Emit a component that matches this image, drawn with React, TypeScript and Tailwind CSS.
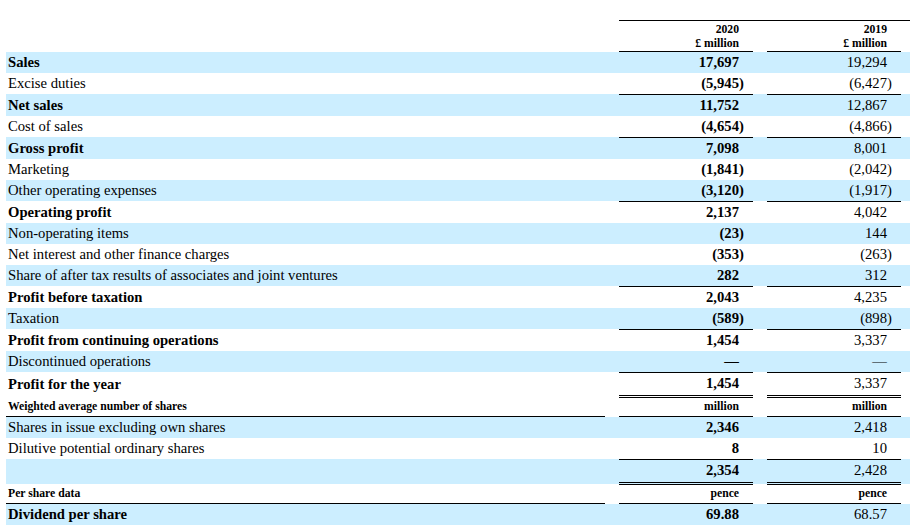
import React from "react";

type Row = {
  label: string;
  a: string;
  b: string;
  bold?: boolean;
  blue?: boolean;
  top?: boolean;
  double?: boolean;
};

const rows: Row[] = [
  { label: "Sales", a: "17,697", b: "19,294", bold: true, blue: true },
  { label: "Excise duties", a: "(5,945)", b: "(6,427)" },
  { label: "Net sales", a: "11,752", b: "12,867", bold: true, blue: true, top: true },
  { label: "Cost of sales", a: "(4,654)", b: "(4,866)" },
  { label: "Gross profit", a: "7,098", b: "8,001", bold: true, blue: true, top: true },
  { label: "Marketing", a: "(1,841)", b: "(2,042)" },
  { label: "Other operating expenses", a: "(3,120)", b: "(1,917)", blue: true },
  { label: "Operating profit", a: "2,137", b: "4,042", bold: true, top: true },
  { label: "Non-operating items", a: "(23)", b: "144", blue: true },
  { label: "Net interest and other finance charges", a: "(353)", b: "(263)" },
  { label: "Share of after tax results of associates and joint ventures", a: "282", b: "312", blue: true },
  { label: "Profit before taxation", a: "2,043", b: "4,235", bold: true, top: true },
  { label: "Taxation", a: "(589)", b: "(898)", blue: true },
  { label: "Profit from continuing operations", a: "1,454", b: "3,337", bold: true, top: true },
  { label: "Discontinued operations", a: "—", b: "—", blue: true },
  { label: "Profit for the year", a: "1,454", b: "3,337", bold: true, top: true, double: true },
];

const shareRows: Row[] = [
  { label: "Shares in issue excluding own shares", a: "2,346", b: "2,418", blue: true },
  { label: "Dilutive potential ordinary shares", a: "8", b: "10" },
  { label: "", a: "2,354", b: "2,428", blue: true, top: true, double: true },
];

function Num({ value }: { value: string }) {
  const neg = value.startsWith("(");
  return (
    <span className="whitespace-nowrap">
      {neg ? value.slice(0, -1) : value}
      <span className="inline-block w-[5px] text-left">{neg ? ")" : ""}</span>
    </span>
  );
}

function BodyRow({ row }: { row: Row }) {
  const h = row.top && row.double ? "h-[25px]" : row.top ? "h-[22px]" : row.double ? "h-[24px]" : "h-[21px]";
  const numBorder = `${row.top ? "border-t" : ""} ${row.double ? "border-b-[3px] border-double" : ""} border-black`;

  return (
    <div
      className={`grid grid-cols-[599px_14px_134px_14px_134px_9px] ${h} ${
        row.blue ? "bg-[#cceeff]" : ""
      }`}
    >
      <div className={`flex items-center pl-[2px] whitespace-nowrap ${row.bold ? "font-bold" : ""}`}>
        {row.label}
      </div>
      <div />
      <div className={`flex items-center justify-end pr-[9px] font-bold ${numBorder}`}>
        <Num value={row.a} />
      </div>
      <div />
      <div className={`flex items-center justify-end pr-[9px] ${numBorder}`}>
        <Num value={row.b} />
      </div>
      <div />
    </div>
  );
}

function SubHeader({ label, unit }: { label: string; unit: string }) {
  return (
    <div className="grid h-[20px] grid-cols-[599px_14px_134px_14px_134px_9px] text-[11.7px] font-bold">
      <div className="flex items-center border-b border-black pl-[2px]">{label}</div>
      <div />
      <div className="flex items-center justify-end border-b border-black pr-[14px]">{unit}</div>
      <div />
      <div className="flex items-center justify-end border-b border-black pr-[14px]">{unit}</div>
      <div />
    </div>
  );
}

export default function App() {
  return (
    <div
      className="min-h-[528px] w-[910px] bg-white pl-[6px] pt-[20px] text-[14.65px] text-black"
      style={{ fontFamily: '"Liberation Serif", "Times New Roman", serif' }}
    >
      <div className="grid h-[32px] grid-cols-[599px_14px_134px_14px_134px_9px] text-[11.7px] font-bold leading-[13.5px]">
        <div />
        <div />
        <div className="flex flex-col items-end justify-end border-t border-b border-black pb-[1px] pr-[14px]">
          <span>2020</span>
          <span>£ million</span>
        </div>
        <div className="border-t border-black" />
        <div className="flex flex-col items-end justify-end border-t border-b border-black pb-[1px] pr-[14px]">
          <span>2019</span>
          <span>£ million</span>
        </div>
        <div className="border-t border-black" />
      </div>

      {rows.map((row) => (
        <BodyRow key={row.label} row={row} />
      ))}

      <SubHeader label="Weighted average number of shares" unit="million" />

      {shareRows.map((row, index) => (
        <BodyRow key={`share-${index}`} row={row} />
      ))}

      <SubHeader label="Per share data" unit="pence" />

      <BodyRow row={{ label: "Dividend per share", a: "69.88", b: "68.57", bold: true, blue: true }} />
    </div>
  );
}
